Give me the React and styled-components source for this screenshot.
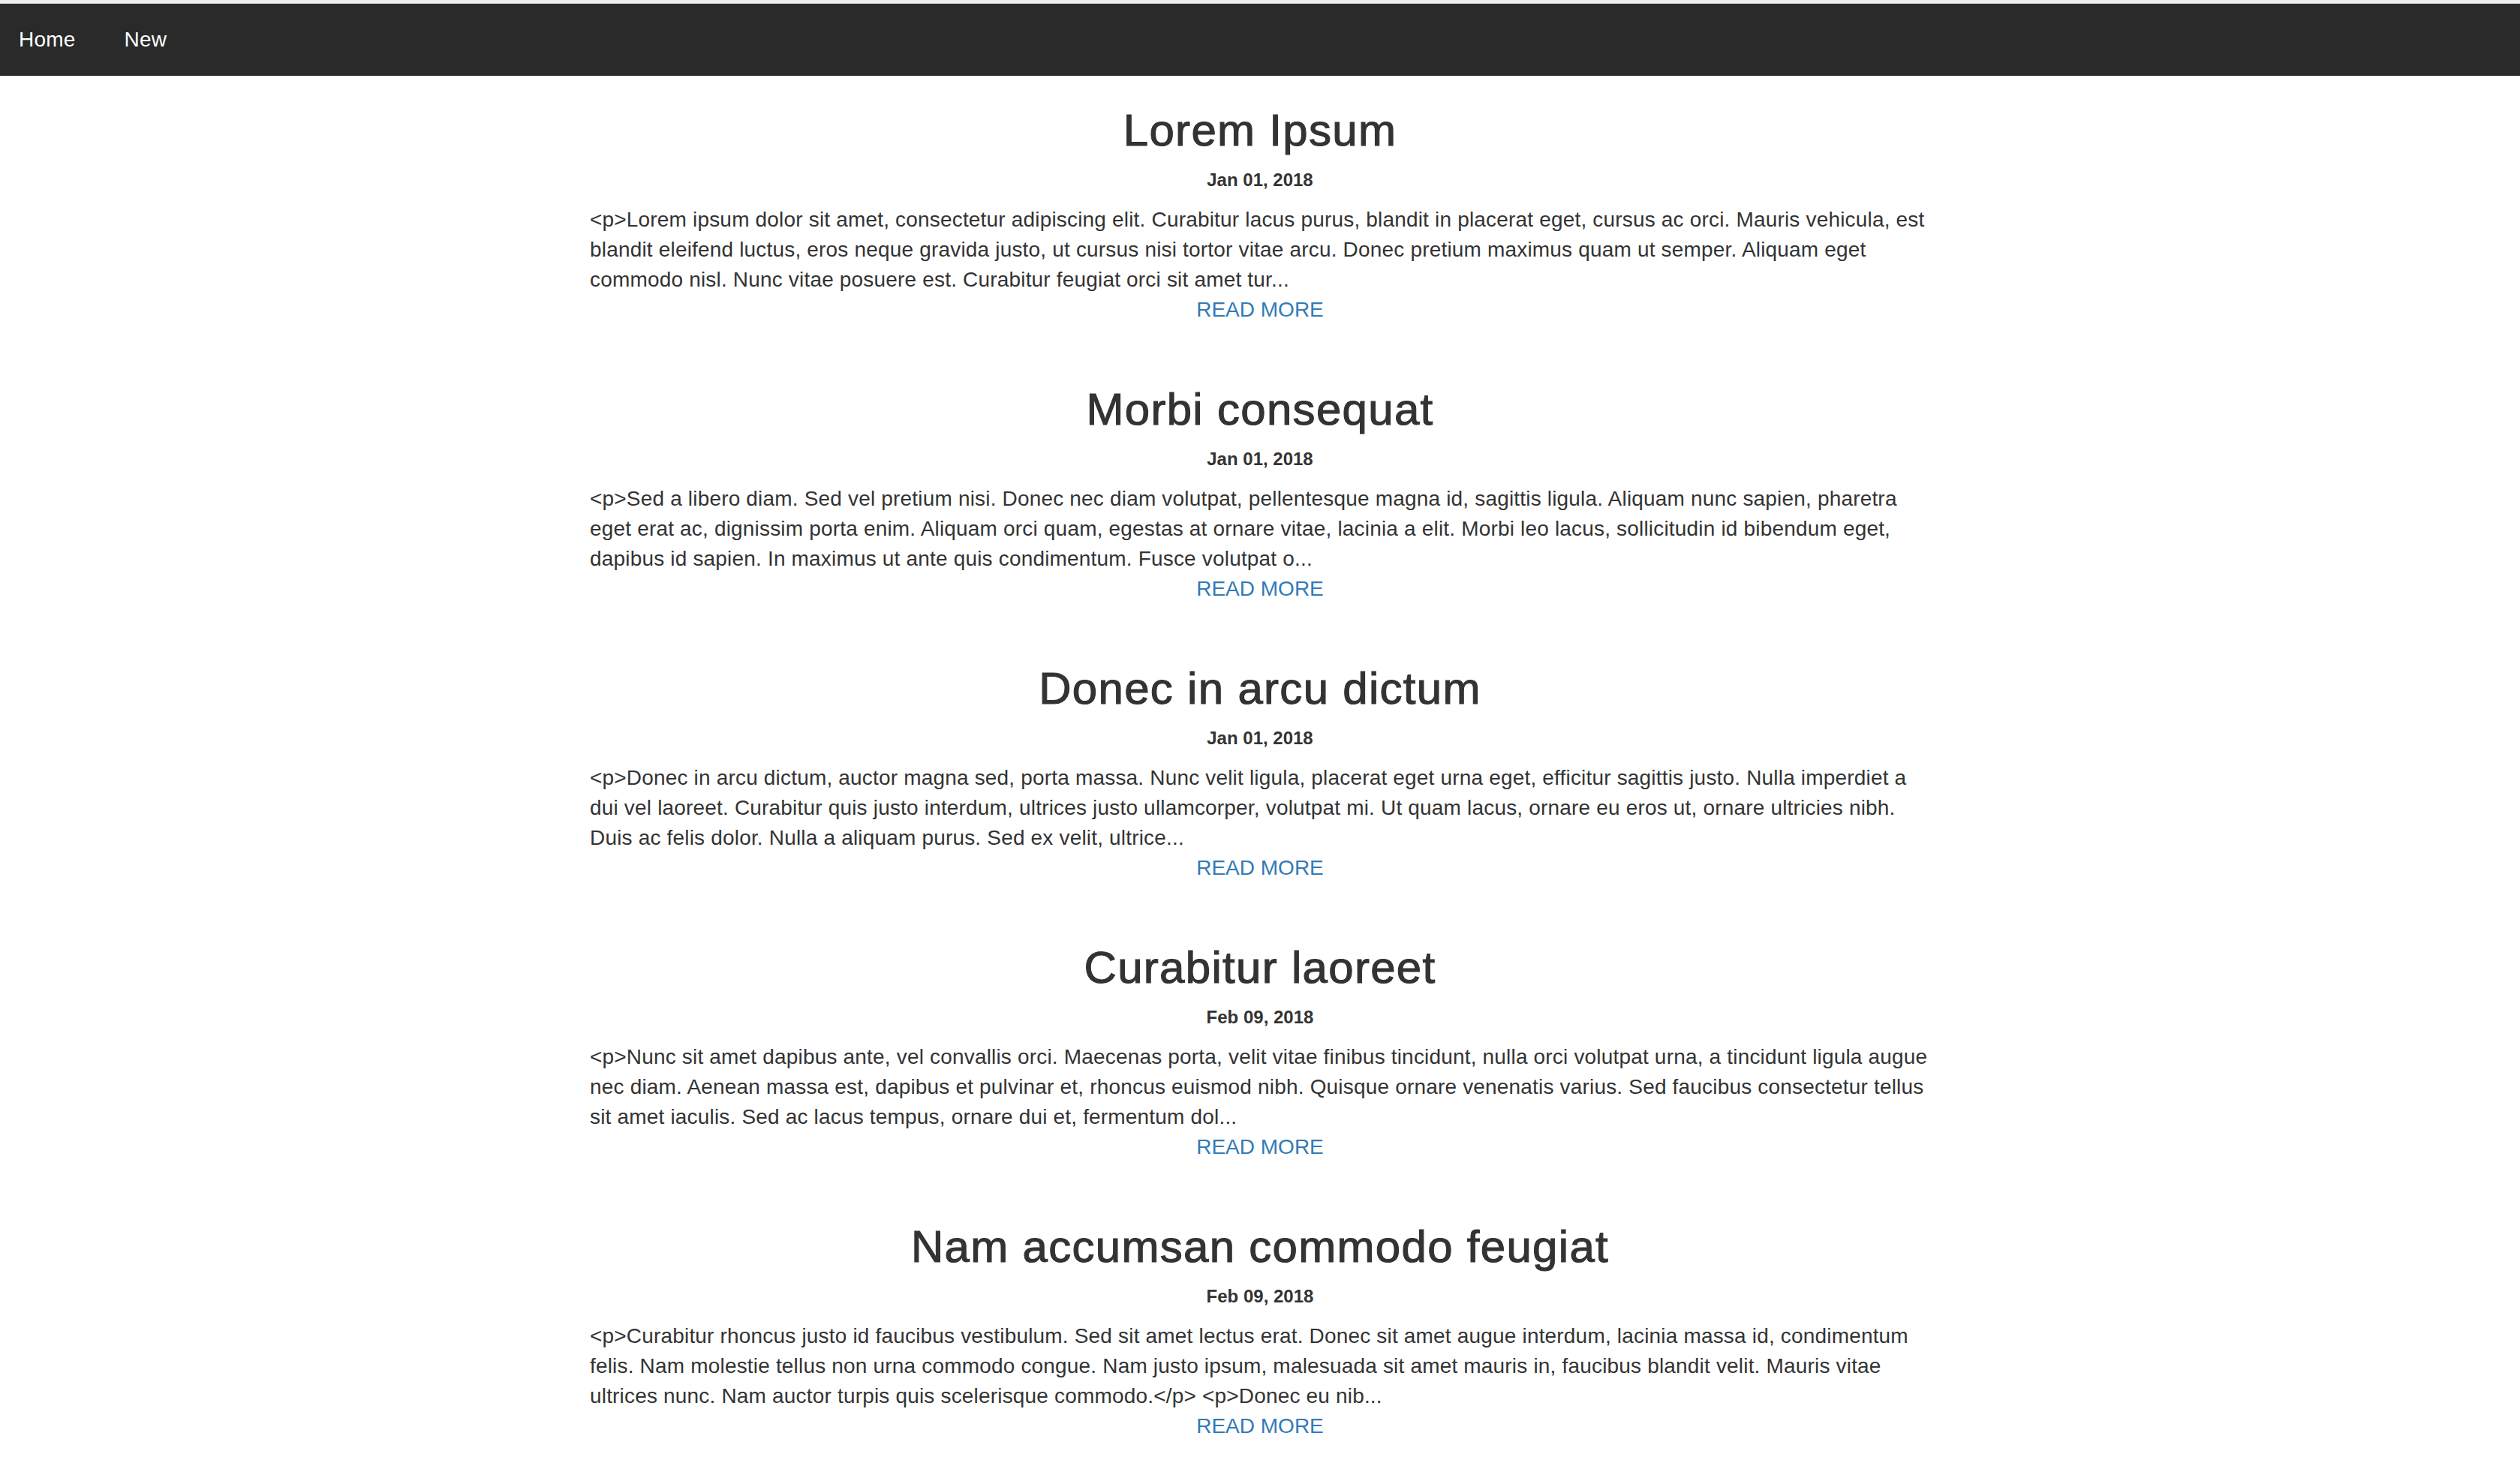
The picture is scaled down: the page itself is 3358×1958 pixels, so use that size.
// Libraries
import React from 'react';

// Styles
import styled, { createGlobalStyle } from 'styled-components';

const GlobalStyle = createGlobalStyle`
  html, body {
    margin: 0;
    padding: 0;
    background: #fff;
  }
  body {
    font-family: "Liberation Sans", Arial, Helvetica, sans-serif;
    color: #333;
  }
`;

const TopStripStyle = styled.div`
  height: 4px;
  background: #efefef;
  border-bottom: 1px solid #d8d8d8;
`;

const NavbarStyle = styled.nav`
  display: flex;
  flex-direction: row;
  align-items: center;
  height: 96px;
  padding: 0 0 0 25px;
  gap: 65px;
  background: #2a2a2a;
`;

const NavLinkStyle = styled.a`
  color: #fff;
  font-size: 28px;
  line-height: 40px;
  letter-spacing: 0.2px;
  text-decoration: none;
`;

const PostListStyle = styled.main`
  width: 1786px;
  margin: 0 auto;
`;

const PostStyle = styled.article`
  padding: 40px 0;
`;

const PostTitleStyle = styled.h2`
  margin: 0 0 20px 0;
  font-size: 60px;
  line-height: 66px;
  font-weight: 400;
  letter-spacing: 1.3px;
  -webkit-text-stroke: 1.1px #333;
  text-align: center;
  color: #333;
`;

const PostDateStyle = styled.h6`
  margin: 0 0 20px 0;
  font-size: 24px;
  line-height: 26px;
  font-weight: 700;
  text-align: center;
  color: #333;
`;

const PostExcerptStyle = styled.div`
  font-size: 28px;
  line-height: 40px;
  letter-spacing: 0.18px;
  color: #333;
`;

const ExcerptLineStyle = styled.span`
  display: block;
  white-space: nowrap;
`;

const ReadMoreStyle = styled.a`
  display: block;
  font-size: 28px;
  line-height: 40px;
  letter-spacing: 0;
  text-align: center;
  color: #337ab7;
  text-decoration: none;
`;

// Data
const posts = [
  {
    title: 'Lorem Ipsum',
    date: 'Jan 01, 2018',
    lines: [
      '<p>Lorem ipsum dolor sit amet, consectetur adipiscing elit. Curabitur lacus purus, blandit in placerat eget, cursus ac orci. Mauris vehicula, est',
      'blandit eleifend luctus, eros neque gravida justo, ut cursus nisi tortor vitae arcu. Donec pretium maximus quam ut semper. Aliquam eget',
      'commodo nisl. Nunc vitae posuere est. Curabitur feugiat orci sit amet tur...',
    ],
  },
  {
    title: 'Morbi consequat',
    date: 'Jan 01, 2018',
    lines: [
      '<p>Sed a libero diam. Sed vel pretium nisi. Donec nec diam volutpat, pellentesque magna id, sagittis ligula. Aliquam nunc sapien, pharetra',
      'eget erat ac, dignissim porta enim. Aliquam orci quam, egestas at ornare vitae, lacinia a elit. Morbi leo lacus, sollicitudin id bibendum eget,',
      'dapibus id sapien. In maximus ut ante quis condimentum. Fusce volutpat o...',
    ],
  },
  {
    title: 'Donec in arcu dictum',
    date: 'Jan 01, 2018',
    lines: [
      '<p>Donec in arcu dictum, auctor magna sed, porta massa. Nunc velit ligula, placerat eget urna eget, efficitur sagittis justo. Nulla imperdiet a',
      'dui vel laoreet. Curabitur quis justo interdum, ultrices justo ullamcorper, volutpat mi. Ut quam lacus, ornare eu eros ut, ornare ultricies nibh.',
      'Duis ac felis dolor. Nulla a aliquam purus. Sed ex velit, ultrice...',
    ],
  },
  {
    title: 'Curabitur laoreet',
    date: 'Feb 09, 2018',
    lines: [
      '<p>Nunc sit amet dapibus ante, vel convallis orci. Maecenas porta, velit vitae finibus tincidunt, nulla orci volutpat urna, a tincidunt ligula augue',
      'nec diam. Aenean massa est, dapibus et pulvinar et, rhoncus euismod nibh. Quisque ornare venenatis varius. Sed faucibus consectetur tellus',
      'sit amet iaculis. Sed ac lacus tempus, ornare dui et, fermentum dol...',
    ],
  },
  {
    title: 'Nam accumsan commodo feugiat',
    date: 'Feb 09, 2018',
    lines: [
      '<p>Curabitur rhoncus justo id faucibus vestibulum. Sed sit amet lectus erat. Donec sit amet augue interdum, lacinia massa id, condimentum',
      'felis. Nam molestie tellus non urna commodo congue. Nam justo ipsum, malesuada sit amet mauris in, faucibus blandit velit. Mauris vitae',
      'ultrices nunc. Nam auctor turpis quis scelerisque commodo.</p> <p>Donec eu nib...',
    ],
  },
];

// Components
const Navbar = function () {
  return (
    <NavbarStyle>
      <NavLinkStyle href="#">Home</NavLinkStyle>
      <NavLinkStyle href="#">New</NavLinkStyle>
    </NavbarStyle>
  );
};

const Post = function (props) {
  const { title, date, lines } = props;
  return (
    <PostStyle>
      <PostTitleStyle>{title}</PostTitleStyle>
      <PostDateStyle>{date}</PostDateStyle>
      <PostExcerptStyle>
        {lines.map((line, i) => (
          <ExcerptLineStyle key={i}>{line}</ExcerptLineStyle>
        ))}
        <ReadMoreStyle href="#">READ MORE</ReadMoreStyle>
      </PostExcerptStyle>
    </PostStyle>
  );
};

export default function App() {
  return (
    <>
      <GlobalStyle />
      <TopStripStyle />
      <Navbar />
      <PostListStyle>
        {posts.map((post) => (
          <Post key={post.title} {...post} />
        ))}
      </PostListStyle>
    </>
  );
}
